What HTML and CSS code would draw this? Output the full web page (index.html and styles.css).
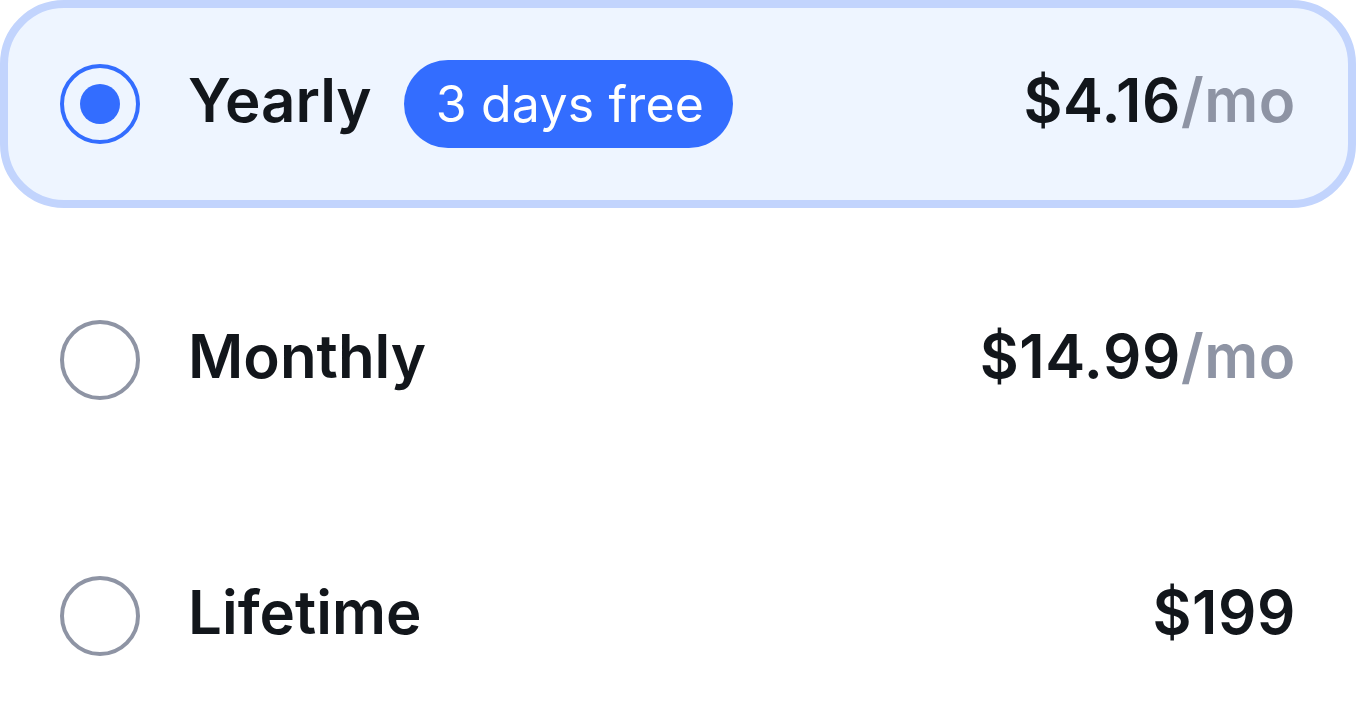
FILE: index.html
```html
<!DOCTYPE html>
<html lang="en">
<head>
  <meta charset="UTF-8" />
  <meta name="viewport" content="width=device-width, initial-scale=1.0"/>
  <title>Plans</title>
  <link rel="stylesheet" href="styles.css">
</head>
<body>
  <div class="plans">
    <label class="plan selected">
      <span class="radio"></span>
      <span class="name">Yearly</span>
      <span class="badge">3 days free</span>
      <span class="price">$4.16<span class="unit">/mo</span></span>
    </label>
    <label class="plan">
      <span class="radio"></span>
      <span class="name">Monthly</span>
      <span class="price">$14.99<span class="unit">/mo</span></span>
    </label>
    <label class="plan">
      <span class="radio"></span>
      <span class="name">Lifetime</span>
      <span class="price">$199</span>
    </label>
  </div>
</body>
</html>
```

FILE: styles.css
```css
* { box-sizing: border-box; margin: 0; padding: 0; }
body {
  font-family: Inter, "Noto Sans", sans-serif;
  background: #fff;
  color: #12161b;
  overflow: hidden;
}

.plans {
  display: flex;
  flex-direction: column;
  gap: 48px;
}

.plan {
  display: flex;
  align-items: center;
  height: 208px;
  padding: 0 52px;
  border: 8px solid transparent;
  border-radius: 64px;
  cursor: pointer;
}

.plan.selected {
  background: #eef5ff;
  border-color: #c2d4fd;
}

.radio {
  position: relative;
  flex: none;
  width: 80px;
  height: 80px;
  border: 4px solid #8e94a4;
  border-radius: 50%;
}

.selected .radio {
  border-color: #336dff;
}

.selected .radio::after {
  content: "";
  position: absolute;
  top: 16px;
  left: 16px;
  width: 40px;
  height: 40px;
  border-radius: 50%;
  background: #336dff;
}

.name {
  margin: 0 0 8px 48px;
  font-size: 60px;
  font-weight: 600;
}

.badge {
  margin-left: 32px;
  height: 88px;
  line-height: 88px;
  padding: 0 29px 0 32px;
  border-radius: 44px;
  background: #336dff;
  color: #fff;
  font-size: 50px;
  letter-spacing: 0.2px;
}

.price {
  margin: 0 0 8px auto;
  font-size: 60px;
  font-weight: 600;
  letter-spacing: 0.6px;
}

.unit {
  color: #8e94a4;
}
```
